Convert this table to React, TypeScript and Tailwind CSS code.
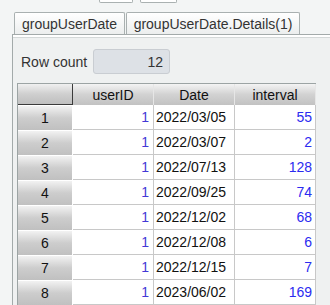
import React from 'react';

const rows: { id: number; date: string; interval: number }[] = [
  { id: 1, date: '2022/03/05', interval: 55 },
  { id: 1, date: '2022/03/07', interval: 2 },
  { id: 1, date: '2022/07/13', interval: 128 },
  { id: 1, date: '2022/09/25', interval: 74 },
  { id: 1, date: '2022/12/02', interval: 68 },
  { id: 1, date: '2022/12/08', interval: 6 },
  { id: 1, date: '2022/12/15', interval: 7 },
  { id: 1, date: '2023/06/02', interval: 169 },
];

const headCell =
  'h-[21px] flex items-center justify-center bg-gradient-to-b from-[#f4f4f4] via-[#d2d2d2] to-[#c2c2c2] border-r border-[#e6e6e6] text-[14px] text-[#111]';

const App: React.FC = () => {
  return (
    <div className="w-[330px] h-[305px] overflow-hidden bg-[#f3f5f5] font-['Liberation_Sans',Arial,sans-serif] text-[14px] leading-none">
      {/* bottoms of the toolbar buttons */}
      <div className="flex h-[12px] items-start pl-[99px] gap-[7px]">
        <div className="w-[34px] h-[3px] bg-white border-x border-b border-[#aab1b1] rounded-b-[2px]" />
        <div className="w-[37px] h-[3px] bg-white border-x border-b border-[#aab1b1] rounded-b-[2px]" />
      </div>

      {/* tabs */}
      <div className="flex items-end h-[22px] pl-[14px]">
        <div className="w-[111px] h-[22px] flex items-center justify-center border-x border-t border-[#a9b0b0] bg-gradient-to-b from-white to-[#eceeee] text-[#333] rounded-t-[2px]">
          groupUserDate
        </div>
        <div className="ml-[1px] w-[174px] h-[22px] flex items-center justify-center border-x border-t border-[#a9b0b0] bg-gradient-to-b from-white to-[#eceeee] text-[#333] rounded-t-[2px]">
          groupUserDate.Details(1)
        </div>
        <div className="flex-1" />
      </div>

      {/* panel */}
      <div className="ml-[12px] border-l border-t border-[#a3aaaa] bg-[#eff1f1] h-full">
        <div className="h-[3px] bg-white border-b border-[#d4d8d8]" />

        <div className="flex items-center pl-[8px] pt-[11px]">
          <span className="w-[72px] text-[#333]">Row count</span>
          <div className="w-[77px] h-[25px] flex items-center justify-end pr-[6px] rounded-[3px] bg-[#dde1e6] border border-[#c9cdd2] text-[#333]">
            12
          </div>
        </div>

        <div className="ml-[4px] mt-[9px] w-[299px] border-l border-t border-[#9ca4a4] grid grid-cols-[55px_81px_81px_81px]">
          <div className="h-[21px] bg-gradient-to-b from-[#f0f0f0] via-[#cfcfcf] to-[#bfbfbf] border-r border-b border-[#3a3a3a]" />
          <div className={headCell}>userID</div>
          <div className={headCell}>Date</div>
          <div className={headCell}>interval</div>

          {rows.map((r, i) => (
            <React.Fragment key={i}>
              <div className="h-[25px] flex items-center justify-center bg-gradient-to-b from-[#f2f2f2] via-[#cdcdcd] to-[#c0c0c0] border-t border-r border-white text-[#111]">
                {i + 1}
              </div>
              <div className="h-[25px] flex items-center justify-end pr-[4px] bg-white border-r border-b border-[#c8c8c8] text-[#4338d6]">
                {r.id}
              </div>
              <div className="h-[25px] flex items-center pl-[2px] bg-white border-r border-b border-[#c8c8c8] text-[#111]">
                {r.date}
              </div>
              <div className="h-[25px] flex items-center justify-end pr-[3px] bg-white border-r border-b border-[#c8c8c8] text-[#2b2bf0]">
                {r.interval}
              </div>
            </React.Fragment>
          ))}
        </div>
      </div>
    </div>
  );
};

export default App;
